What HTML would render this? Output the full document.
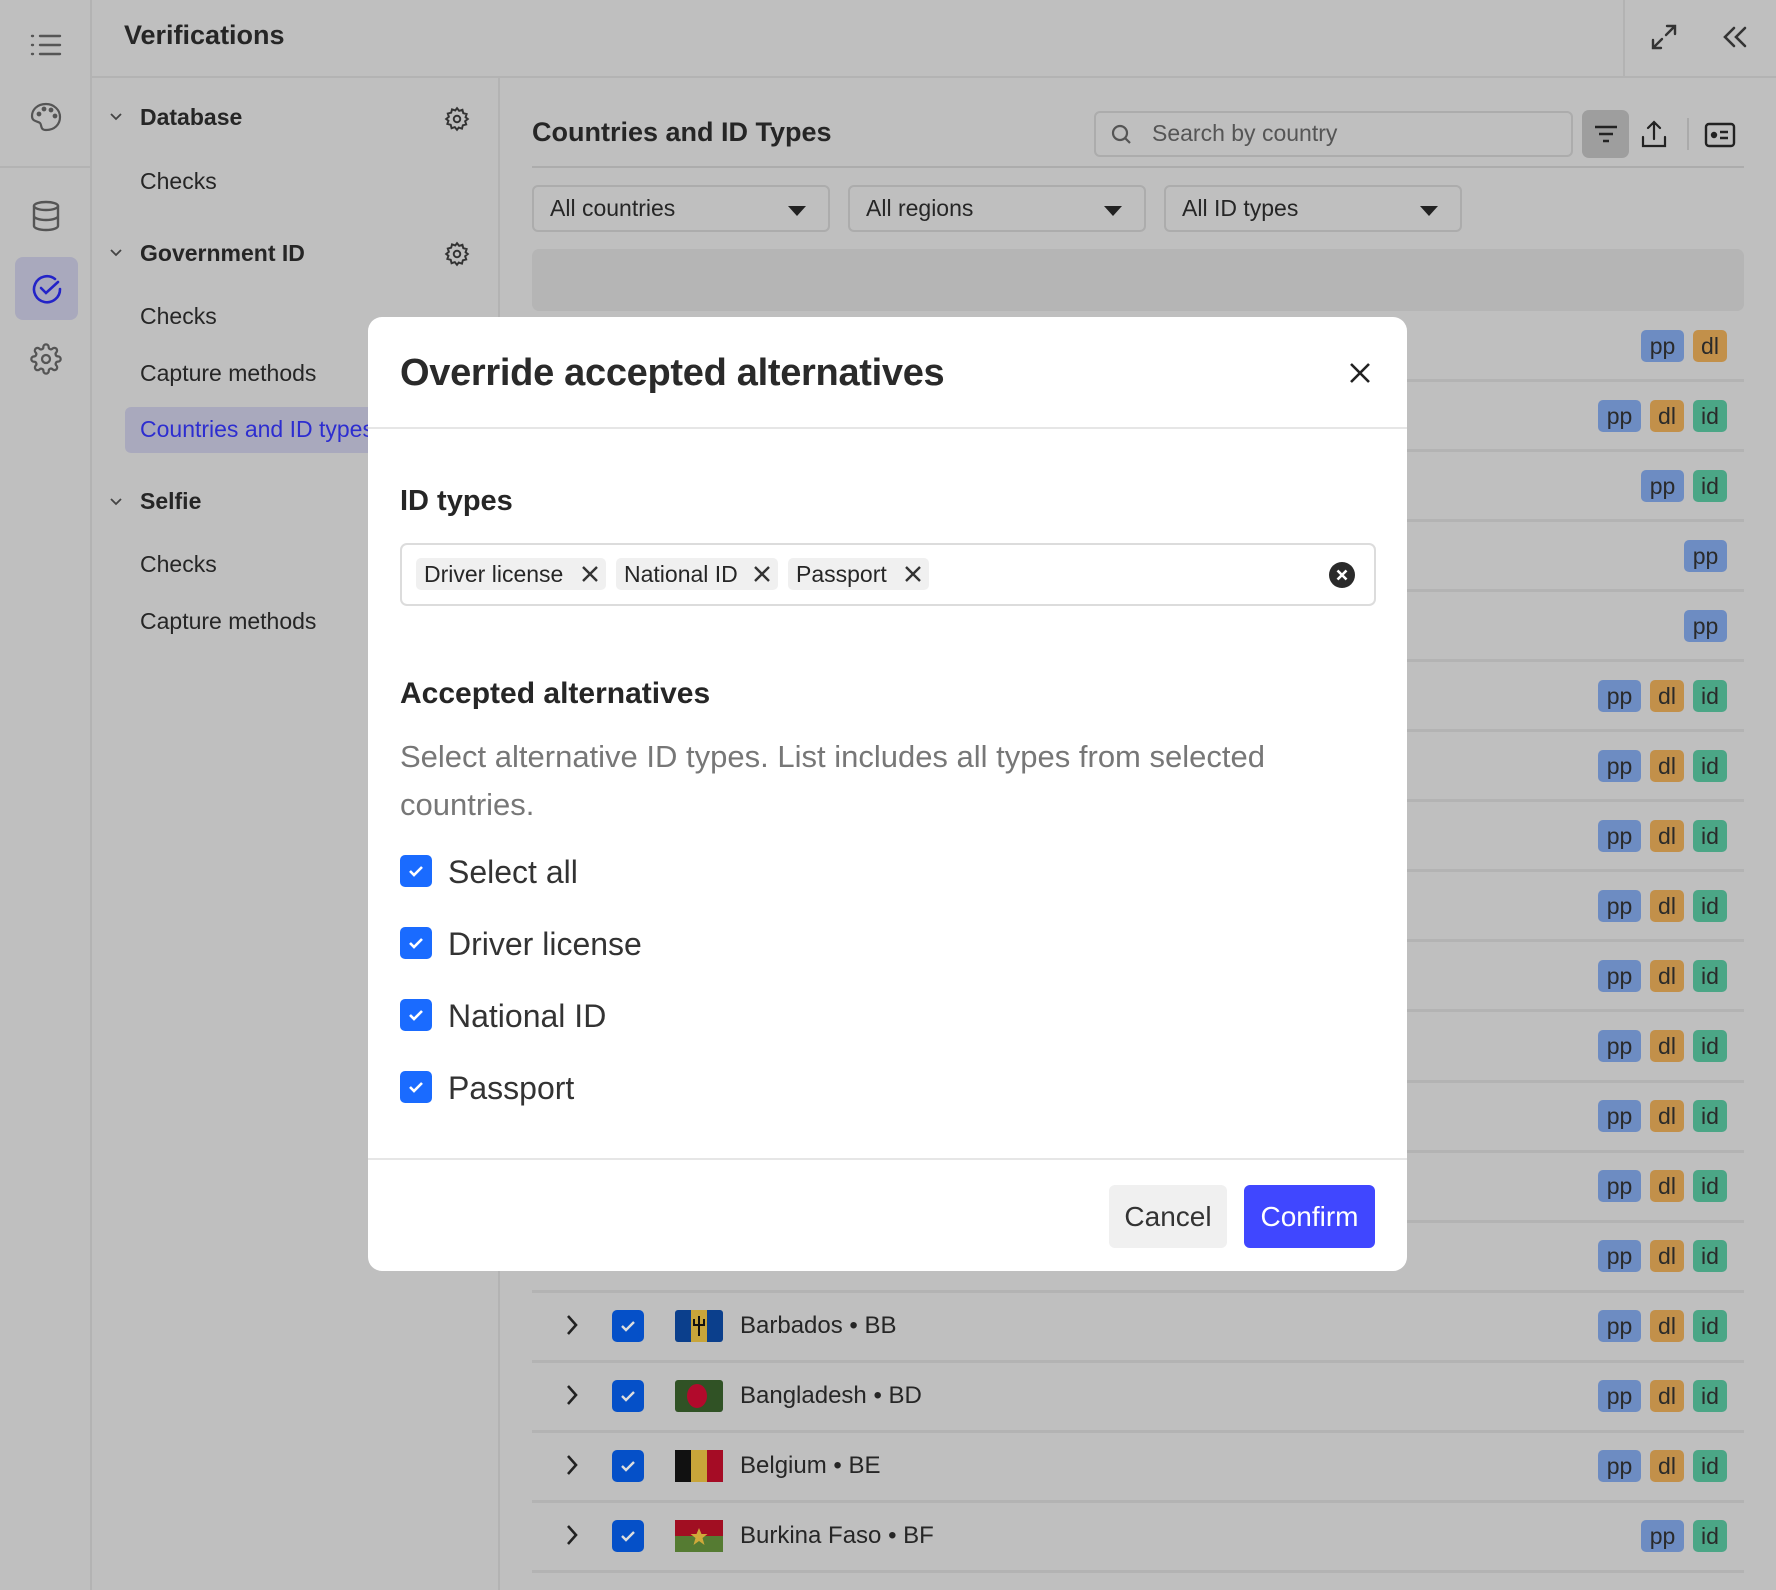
<!DOCTYPE html>
<html><head><meta charset="utf-8"><style>
*{box-sizing:border-box;margin:0;padding:0}
body{width:1776px;height:1590px;overflow:hidden;background:#bfbfbf;font-family:"Liberation Sans",sans-serif;color:#262626;position:relative}
.a{position:absolute}
.t{position:absolute;white-space:nowrap;line-height:1}
.badge{position:absolute;height:32px;border-radius:5px;font-size:23px;line-height:32px;text-align:center;color:#2a2a2a}
.pp{background:#6d8cc2;width:43px}.dl{background:#c2904a;width:34px}.id{background:#4ba686;width:34px}
.sep{position:absolute;height:3px;background:#b3b3b3;left:532px;width:1212px}
.dd{position:absolute;top:185px;height:47px;border:2px solid #acacac;border-radius:6px;width:298px}
.dd span{position:absolute;left:16px;top:8px;font-size:23px}
.dd i{position:absolute;right:22px;top:19px;border-left:9px solid transparent;border-right:9px solid transparent;border-top:10px solid #222}
.tag{position:absolute;top:558px;height:32px;background:#f0f0f0;border-radius:5px;font-size:23px;line-height:32px;padding-left:8px}
</style></head><body>
<div class="a" style="left:90px;top:0;width:2px;height:1590px;background:#b3b3b3"></div>
<div class="a" style="left:0;top:166px;width:90px;height:2px;background:#b3b3b3"></div>
<svg class="a" style="left:30px;top:33px" width="32" height="24" viewBox="0 0 32 24" fill="none" stroke="#555" stroke-width="2.4" stroke-linecap="round"><path d="M2 3h1M2 12h1M2 21h1M10 3h20M10 12h20M10 21h20"/></svg>
<svg class="a" style="left:30px;top:102px" width="32" height="30" viewBox="0 0 32 30" fill="none" stroke="#555" stroke-width="2.2"><path d="M16 2C7 2 2 8 2 14c0 6 6 5 8 7s0 7 6 7c9 0 14-6 14-13S24 2 16 2z"/><circle cx="9" cy="12" r="1.3" fill="#555"/><circle cx="14" cy="7" r="1.3" fill="#555"/><circle cx="21" cy="8" r="1.3" fill="#555"/><circle cx="25" cy="14" r="1.3" fill="#555"/></svg>
<svg class="a" style="left:31px;top:200px" width="30" height="32" viewBox="0 0 30 32" fill="none" stroke="#555" stroke-width="2.4"><ellipse cx="15" cy="6" rx="12" ry="4"/><path d="M3 6v20c0 2 5 4 12 4s12-2 12-4V6M3 16c0 2 5 4 12 4s12-2 12-4"/></svg>
<div class="a" style="left:15px;top:257px;width:63px;height:63px;border-radius:8px;background:#a9a9bd"></div>
<svg class="a" style="left:31px;top:273px" width="32" height="32" viewBox="0 0 32 32" fill="none" stroke="#2323c8" stroke-width="2.6" stroke-linecap="round"><path d="M29 16A13 13 0 1 1 24 6"/><path d="M10 15l5 5 12-11"/></svg>
<svg class="a" style="left:30px;top:343px" width="32" height="32" viewBox="0 0 24 24" fill="none" stroke="#555" stroke-width="1.7"><circle cx="12" cy="12" r="3"/><path d="M19.4 15a1.65 1.65 0 0 0 .33 1.820l.06.06a2 2 0 1 1-2.83 2.83l-.06-.06a1.65 1.65 0 0 0-1.82-.33 1.65 1.65 0 0 0-1 1.51V21a2 2 0 1 1-4 0v-.09A1.65 1.65 0 0 0 9 19.4a1.65 1.65 0 0 0-1.82.33l-.06.06a2 2 0 1 1-2.83-2.83l.06-.06a1.65 1.65 0 0 0 .33-1.82 1.65 1.650 0 0 0-1.51-1H3a2 2 0 1 1 0-4h.09A1.65 1.65 0 0 0 4.6 9a1.65 1.65 0 0 0-.33-1.82l-.06-.06a2 2 0 1 1 2.83-2.83l.06.06a1.65 1.65 0 0 0 1.82.33H9a1.65 1.65 0 0 0 1-1.51V3a2 2 0 1 1 4 0v.09a1.65 1.65 0 0 0 1 1.51 1.65 1.65 0 0 0 1.82-.33l.06-.06a2 2 0 1 1 2.83 2.83l-.06.06a1.65 1.65 0 0 0-.33 1.82V9a1.65 1.65 0 0 0 1.51 1H21a2 2 0 1 1 0 4h-.09a1.65 1.65 0 0 0-1.51 1z"/></svg>
<div class="t" style="left:124px;top:22px;font-size:27px;font-weight:bold">Verifications</div>
<div class="a" style="left:92px;top:76px;width:1684px;height:2px;background:#b3b3b3"></div>
<div class="a" style="left:1623px;top:0;width:2px;height:77px;background:#b3b3b3"></div>
<svg class="a" style="left:1650px;top:23px" width="28" height="28" viewBox="0 0 28 28" fill="none" stroke="#333" stroke-width="2.4" stroke-linecap="round"><path d="M17 3h8v8M25 3l-9 9M11 25H3v-8M3 25l9-9"/></svg>
<svg class="a" style="left:1722px;top:26px" width="26" height="22" viewBox="0 0 26 22" fill="none" stroke="#333" stroke-width="2.6" stroke-linecap="round"><path d="M12 2L3 11l9 9M23 2l-9 9 9 9"/></svg>
<div class="a" style="left:498px;top:77px;width:2px;height:1513px;background:#b3b3b3"></div>
<svg class="a" style="left:110px;top:113px" width="12" height="8"><path d="M1 1l5 5 5-5" fill="none" stroke="#444" stroke-width="1.8"/></svg>
<div class="t" style="left:140px;top:106px;font-size:23px;font-weight:bold">Database</div>
<div class="t" style="left:140px;top:170px;font-size:23px">Checks</div>
<svg class="a" style="left:110px;top:249px" width="12" height="8"><path d="M1 1l5 5 5-5" fill="none" stroke="#444" stroke-width="1.8"/></svg>
<div class="t" style="left:140px;top:242px;font-size:23px;font-weight:bold">Government ID</div>
<div class="t" style="left:140px;top:305px;font-size:23px">Checks</div>
<div class="t" style="left:140px;top:362px;font-size:23px">Capture methods</div>
<div class="a" style="left:125px;top:407px;width:260px;height:46px;border-radius:6px;background:#a9a9bd"></div>
<div class="t" style="left:140px;top:418px;font-size:23px;color:#2d2dd0">Countries and ID types</div>
<svg class="a" style="left:110px;top:498px" width="12" height="8"><path d="M1 1l5 5 5-5" fill="none" stroke="#444" stroke-width="1.8"/></svg>
<div class="t" style="left:140px;top:490px;font-size:23px;font-weight:bold">Selfie</div>
<div class="t" style="left:140px;top:553px;font-size:23px">Checks</div>
<div class="t" style="left:140px;top:610px;font-size:23px">Capture methods</div>
<svg class="a" style="left:444px;top:106px" width="26" height="26" viewBox="0 0 24 24" fill="none" stroke="#333" stroke-width="1.8"><circle cx="12" cy="12" r="3"/><path d="M12 2l2 2.5 3-1 .8 3.1 3.1.8-1 3L22 12l-2.5 2 1 3-3.1.8-.8 3.1-3-1L12 22l-2-2.5-3 1-.8-3.1L3.1 16.6l1-3L2 12l2.5-2-1-3 3.1-.8.8-3.1 3 1z"/></svg>
<svg class="a" style="left:444px;top:241px" width="26" height="26" viewBox="0 0 24 24" fill="none" stroke="#333" stroke-width="1.8"><circle cx="12" cy="12" r="3"/><path d="M12 2l2 2.5 3-1 .8 3.1 3.1.8-1 3L22 12l-2.5 2 1 3-3.1.8-.8 3.1-3-1L12 22l-2-2.5-3 1-.8-3.1L3.1 16.6l1-3L2 12l2.5-2-1-3 3.1-.8.8-3.1 3 1z"/></svg>
<div class="t" style="left:532px;top:119px;font-size:27px;font-weight:bold">Countries and ID Types</div>
<div class="a" style="left:1094px;top:111px;width:479px;height:46px;border:2px solid #acacac;border-radius:6px"></div>
<svg class="a" style="left:1110px;top:123px" width="24" height="24" viewBox="0 0 24 24" fill="none" stroke="#555" stroke-width="2.2"><circle cx="10" cy="10" r="7"/><path d="M15 15l5 5"/></svg>
<div class="t" style="left:1152px;top:122px;font-size:23px;color:#555">Search by country</div>
<div class="a" style="left:1582px;top:110px;width:47px;height:48px;border-radius:7px;background:#9e9e9e"></div>
<svg class="a" style="left:1593px;top:124px" width="26" height="20"><path d="M2 3h22M6 10h14M10 17h6" stroke="#222" stroke-width="2.6"/></svg>
<svg class="a" style="left:1640px;top:119px" width="28" height="30" viewBox="0 0 28 30" fill="none" stroke="#222" stroke-width="2.2" stroke-linecap="round"><path d="M14 20V3M8 9l6-6 6 6M3 18v9h22v-9"/></svg>
<div class="a" style="left:1687px;top:118px;width:2px;height:32px;background:#aaa"></div>
<svg class="a" style="left:1704px;top:122px" width="32" height="26" viewBox="0 0 32 26" fill="none" stroke="#222" stroke-width="2.4"><rect x="2" y="2" width="28" height="22" rx="3"/><circle cx="10" cy="13" r="2" fill="#222"/><path d="M16 10h8M16 16h8"/></svg>
<div class="a" style="left:532px;top:166px;width:1212px;height:2px;background:#acacac"></div>
<div class="dd" style="left:532px"><span>All countries</span><i></i></div>
<div class="dd" style="left:848px"><span>All regions</span><i></i></div>
<div class="dd" style="left:1164px"><span>All ID types</span><i></i></div>
<div class="a" style="left:532px;top:249px;width:1212px;height:62px;border-radius:7px;background:#b5b5b5"></div>
<div class="sep" style="top:379px"></div><div class="sep" style="top:449px"></div><div class="sep" style="top:519px"></div><div class="sep" style="top:589px"></div><div class="sep" style="top:659px"></div><div class="sep" style="top:729px"></div><div class="sep" style="top:799px"></div><div class="sep" style="top:869px"></div><div class="sep" style="top:939px"></div><div class="sep" style="top:1009px"></div><div class="sep" style="top:1080px"></div><div class="sep" style="top:1150px"></div><div class="sep" style="top:1220px"></div><div class="sep" style="top:1290px"></div><div class="sep" style="top:1360px"></div><div class="sep" style="top:1430px"></div><div class="sep" style="top:1500px"></div><div class="sep" style="top:1570px"></div>
<div class="badge pp" style="left:1641px;top:330px">pp</div><div class="badge dl" style="left:1693px;top:330px">dl</div>
<div class="badge pp" style="left:1598px;top:400px">pp</div><div class="badge dl" style="left:1650px;top:400px">dl</div><div class="badge id" style="left:1693px;top:400px">id</div>
<div class="badge pp" style="left:1641px;top:470px">pp</div><div class="badge id" style="left:1693px;top:470px">id</div>
<div class="badge pp" style="left:1684px;top:540px">pp</div>
<div class="badge pp" style="left:1684px;top:610px">pp</div>
<div class="badge pp" style="left:1598px;top:680px">pp</div><div class="badge dl" style="left:1650px;top:680px">dl</div><div class="badge id" style="left:1693px;top:680px">id</div>
<div class="badge pp" style="left:1598px;top:750px">pp</div><div class="badge dl" style="left:1650px;top:750px">dl</div><div class="badge id" style="left:1693px;top:750px">id</div>
<div class="badge pp" style="left:1598px;top:820px">pp</div><div class="badge dl" style="left:1650px;top:820px">dl</div><div class="badge id" style="left:1693px;top:820px">id</div>
<div class="badge pp" style="left:1598px;top:890px">pp</div><div class="badge dl" style="left:1650px;top:890px">dl</div><div class="badge id" style="left:1693px;top:890px">id</div>
<div class="badge pp" style="left:1598px;top:960px">pp</div><div class="badge dl" style="left:1650px;top:960px">dl</div><div class="badge id" style="left:1693px;top:960px">id</div>
<div class="badge pp" style="left:1598px;top:1030px">pp</div><div class="badge dl" style="left:1650px;top:1030px">dl</div><div class="badge id" style="left:1693px;top:1030px">id</div>
<div class="badge pp" style="left:1598px;top:1100px">pp</div><div class="badge dl" style="left:1650px;top:1100px">dl</div><div class="badge id" style="left:1693px;top:1100px">id</div>
<div class="badge pp" style="left:1598px;top:1170px">pp</div><div class="badge dl" style="left:1650px;top:1170px">dl</div><div class="badge id" style="left:1693px;top:1170px">id</div>
<div class="badge pp" style="left:1598px;top:1240px">pp</div><div class="badge dl" style="left:1650px;top:1240px">dl</div><div class="badge id" style="left:1693px;top:1240px">id</div>
<div class="badge pp" style="left:1598px;top:1310px">pp</div><div class="badge dl" style="left:1650px;top:1310px">dl</div><div class="badge id" style="left:1693px;top:1310px">id</div>
<div class="badge pp" style="left:1598px;top:1380px">pp</div><div class="badge dl" style="left:1650px;top:1380px">dl</div><div class="badge id" style="left:1693px;top:1380px">id</div>
<div class="badge pp" style="left:1598px;top:1450px">pp</div><div class="badge dl" style="left:1650px;top:1450px">dl</div><div class="badge id" style="left:1693px;top:1450px">id</div>
<div class="badge pp" style="left:1641px;top:1520px">pp</div><div class="badge id" style="left:1693px;top:1520px">id</div>
<svg class="a" style="left:565px;top:1314px" width="14" height="22"><path d="M3 2l8 9-8 9" fill="none" stroke="#222" stroke-width="2.6"/></svg>
<svg class="a" style="left:565px;top:1384px" width="14" height="22"><path d="M3 2l8 9-8 9" fill="none" stroke="#222" stroke-width="2.6"/></svg>
<svg class="a" style="left:565px;top:1454px" width="14" height="22"><path d="M3 2l8 9-8 9" fill="none" stroke="#222" stroke-width="2.6"/></svg>
<svg class="a" style="left:565px;top:1524px" width="14" height="22"><path d="M3 2l8 9-8 9" fill="none" stroke="#222" stroke-width="2.6"/></svg>
<svg class="a" style="left:612px;top:1310px" width="32" height="32"><rect width="32" height="32" rx="5" fill="#0550c8"/><path d="M10 16l4 4 8-8" fill="none" stroke="#ddd" stroke-width="2.4"/></svg>
<svg class="a" style="left:612px;top:1380px" width="32" height="32"><rect width="32" height="32" rx="5" fill="#0550c8"/><path d="M10 16l4 4 8-8" fill="none" stroke="#ddd" stroke-width="2.4"/></svg>
<svg class="a" style="left:612px;top:1450px" width="32" height="32"><rect width="32" height="32" rx="5" fill="#0550c8"/><path d="M10 16l4 4 8-8" fill="none" stroke="#ddd" stroke-width="2.4"/></svg>
<svg class="a" style="left:612px;top:1520px" width="32" height="32"><rect width="32" height="32" rx="5" fill="#0550c8"/><path d="M10 16l4 4 8-8" fill="none" stroke="#ddd" stroke-width="2.4"/></svg>
<svg class="a" style="left:675px;top:1310px" width="48" height="32"><rect width="48" height="32" rx="3" fill="#0b3f8c"/><rect x="16" width="16" height="32" fill="#c8a53a"/><path d="M24 6v20M19 9v6h10V9" stroke="#111" stroke-width="2" fill="none"/></svg>
<svg class="a" style="left:675px;top:1380px" width="48" height="32"><rect width="48" height="32" rx="3" fill="#305225"/><ellipse cx="22" cy="16" rx="10" ry="12" fill="#b20a2c"/></svg>
<svg class="a" style="left:675px;top:1450px" width="48" height="32"><rect width="16" height="32" fill="#111"/><rect x="16" width="16" height="32" fill="#c8a53a"/><rect x="32" width="16" height="32" fill="#a50c25"/></svg>
<svg class="a" style="left:675px;top:1520px" width="48" height="32"><rect width="48" height="16" fill="#a10e22"/><rect y="16" width="48" height="16" fill="#557b32"/><path d="M24 8l2.5 6h6l-5 4 2 7-5.5-4-5.5 4 2-7-5-4h6z" fill="#d0a93a"/></svg>
<div class="t" style="left:740px;top:1314px;font-size:24px">Barbados • BB</div>
<div class="t" style="left:740px;top:1384px;font-size:24px">Bangladesh • BD</div>
<div class="t" style="left:740px;top:1454px;font-size:24px">Belgium • BE</div>
<div class="t" style="left:740px;top:1524px;font-size:24px">Burkina Faso • BF</div>
<div class="a" style="left:368px;top:317px;width:1039px;height:954px;background:#fff;border-radius:14px;overflow:hidden">
 <div class="t" style="left:32px;top:37px;font-size:38px;font-weight:bold;color:#2a2a2a;letter-spacing:-0.3px">Override accepted alternatives</div>
 <svg class="a" style="left:981px;top:45px" width="22" height="22"><path d="M2 2l18 18M20 2L2 20" stroke="#222" stroke-width="2.6"/></svg>
 <div class="a" style="left:0;top:110px;width:1039px;height:2px;background:#e6e6e6"></div>
 <div class="t" style="left:32px;top:170px;font-size:29px;font-weight:bold">ID types</div>
 <div class="a" style="left:32px;top:226px;width:976px;height:63px;border:2px solid #dcdcdc;border-radius:7px"></div>
 <svg class="a" style="left:961px;top:245px" width="26" height="26"><circle cx="13" cy="13" r="13" fill="#2a2a2a"/><path d="M8.5 8.5l9 9M17.5 8.5l-9 9" stroke="#fff" stroke-width="2.6"/></svg>
 <div class="t" style="left:32px;top:362px;font-size:30px;font-weight:bold">Accepted alternatives</div>
 <div class="t" style="left:32px;top:424px;font-size:31px;color:#777">Select alternative ID types. List includes all types from selected</div>
 <div class="t" style="left:32px;top:472px;font-size:31px;color:#777">countries.</div>
 <div class="a" style="left:0;top:841px;width:1039px;height:2px;background:#e6e6e6"></div>
 <div class="a" style="left:741px;top:868px;width:118px;height:63px;border-radius:6px;background:#f0f0f0;font-size:28px;line-height:63px;text-align:center;color:#333">Cancel</div>
 <div class="a" style="left:876px;top:868px;width:131px;height:63px;border-radius:6px;background:#4047ff;font-size:28px;line-height:63px;text-align:center;color:#fff">Confirm</div>
</div>
<div class="tag" style="left:416px;width:190px">Driver license</div>
<div class="tag" style="left:616px;width:162px">National ID</div>
<div class="tag" style="left:788px;width:141px">Passport</div>
<svg class="a" style="left:581px;top:565px" width="18" height="18"><path d="M2 2l14 14M16 2L2 16" stroke="#333" stroke-width="2.4"/></svg>
<svg class="a" style="left:753px;top:565px" width="18" height="18"><path d="M2 2l14 14M16 2L2 16" stroke="#333" stroke-width="2.4"/></svg>
<svg class="a" style="left:904px;top:565px" width="18" height="18"><path d="M2 2l14 14M16 2L2 16" stroke="#333" stroke-width="2.4"/></svg>
<svg class="a" style="left:400px;top:855px" width="32" height="32"><rect width="32" height="32" rx="5" fill="#1a6bff"/><path d="M10 16l4 4 8-8" fill="none" stroke="#fff" stroke-width="2.6"/></svg>
<svg class="a" style="left:400px;top:927px" width="32" height="32"><rect width="32" height="32" rx="5" fill="#1a6bff"/><path d="M10 16l4 4 8-8" fill="none" stroke="#fff" stroke-width="2.6"/></svg>
<svg class="a" style="left:400px;top:999px" width="32" height="32"><rect width="32" height="32" rx="5" fill="#1a6bff"/><path d="M10 16l4 4 8-8" fill="none" stroke="#fff" stroke-width="2.6"/></svg>
<svg class="a" style="left:400px;top:1071px" width="32" height="32"><rect width="32" height="32" rx="5" fill="#1a6bff"/><path d="M10 16l4 4 8-8" fill="none" stroke="#fff" stroke-width="2.6"/></svg>
<div class="t" style="left:448px;top:856px;font-size:32px;color:#333">Select all</div>
<div class="t" style="left:448px;top:928px;font-size:32px;color:#333">Driver license</div>
<div class="t" style="left:448px;top:1000px;font-size:32px;color:#333">National ID</div>
<div class="t" style="left:448px;top:1072px;font-size:32px;color:#333">Passport</div>
</body></html>
